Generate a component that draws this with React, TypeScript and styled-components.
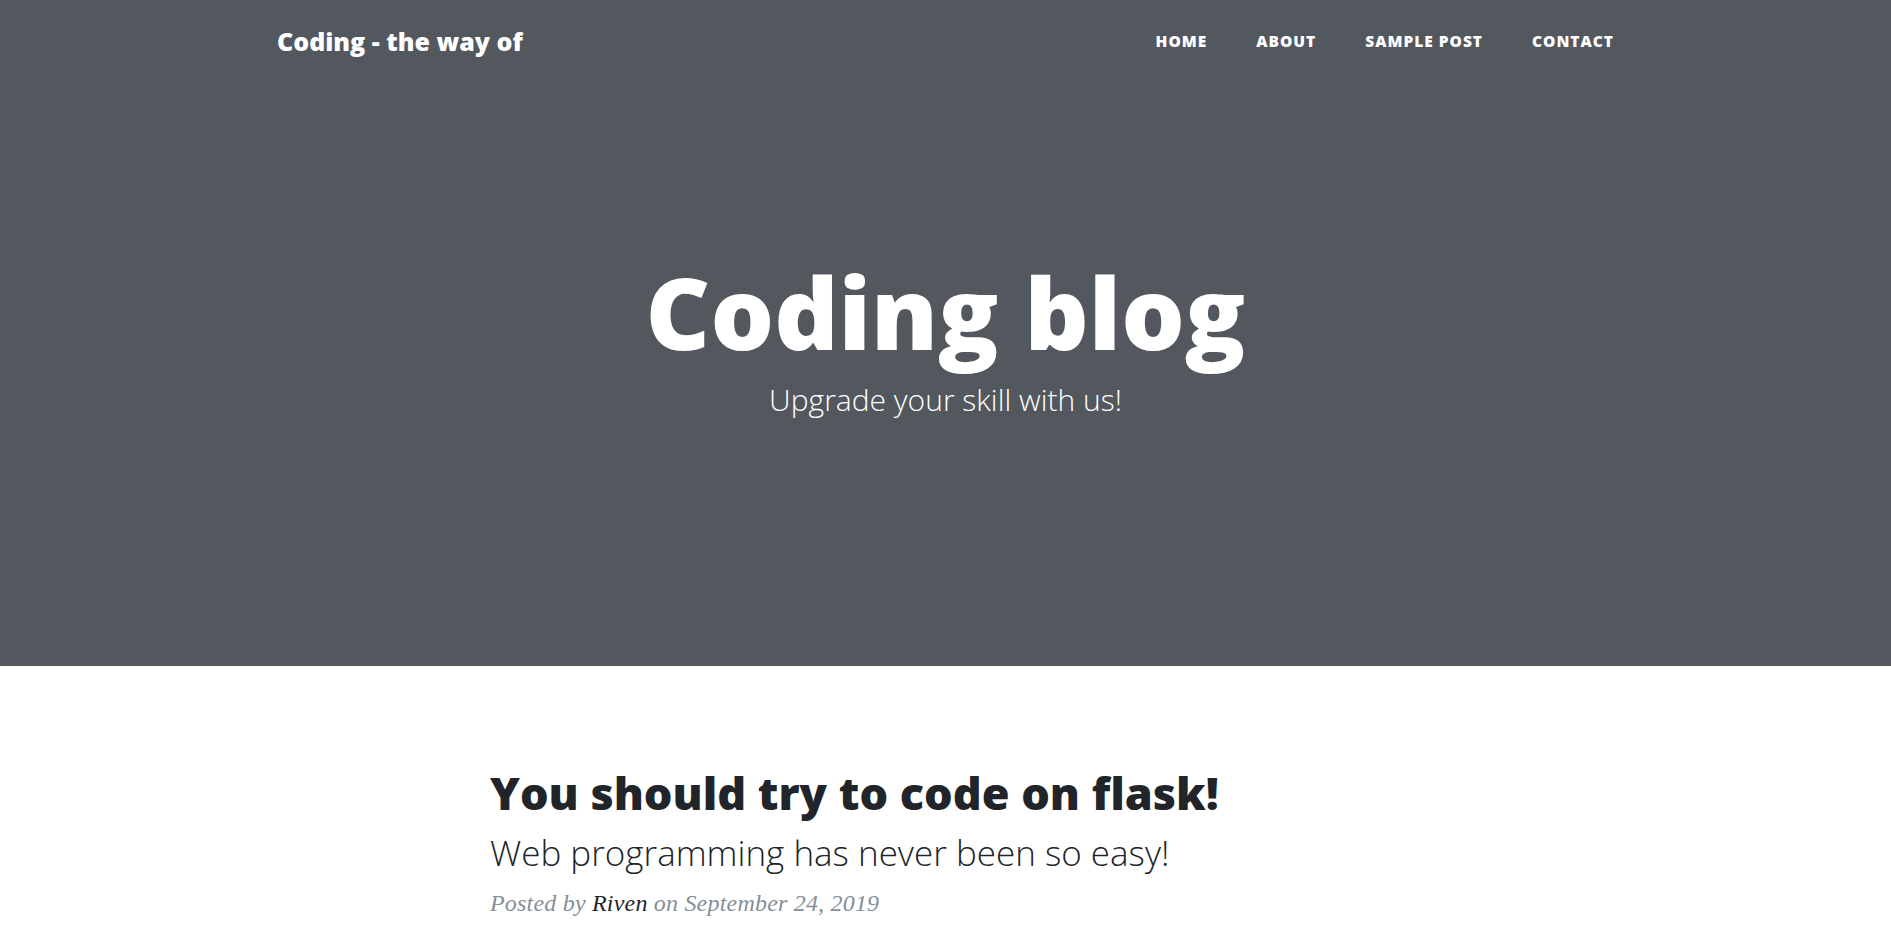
import React from "react";
import styled, { createGlobalStyle } from "styled-components";

const GlobalStyle = createGlobalStyle`
    html, body {
        margin: 0;
        padding: 0;
        background: #ffffff;
    }
    body {
        font-family: "Open Sans", "Liberation Sans", sans-serif;
        color: #212529;
    }
`;

const Masthead = styled.header`
    background-color: #53585f;
    height: 666px;
    box-sizing: border-box;
`;

const Container = styled.div`
    max-width: 1337px;
    margin: 0 auto;
`;

const Nav = styled.nav`
    display: flex;
    align-items: center;
    justify-content: space-between;
    padding-top: 25px;
`;

const Brand = styled.a`
    color: #ffffff;
    font-size: 25px;
    font-weight: 800;
    line-height: 33px;
    text-decoration: none;
`;

const NavList = styled.ul`
    display: flex;
    list-style: none;
    margin: 0;
    padding: 0;
    gap: 49px;
`;

const NavLink = styled.a`
    color: #ffffff;
    font-size: 15.5px;
    font-weight: 800;
    letter-spacing: 1px;
    text-transform: uppercase;
    text-decoration: none;
    line-height: 33px;
`;

const Heading = styled.div`
    display: flex;
    flex-direction: column;
    align-items: center;
    padding-top: 193px;
    color: #ffffff;
`;

const Title = styled.h1`
    margin: 0;
    font-size: 100px;
    font-weight: 800;
    line-height: 1.2;
`;

const Subheading = styled.span`
    margin-top: 12px;
    font-size: 30px;
    font-weight: 300;
    line-height: 1.1;
`;

const Posts = styled.main`
    max-width: 911px;
    margin: 100px auto 0;
`;

const PostLink = styled.a`
    color: #212529;
    text-decoration: none;
    display: block;
`;

const PostTitle = styled.h2`
    margin: 0;
    font-size: 45px;
    font-weight: 800;
    line-height: 1.2;
`;

const PostSubtitle = styled.h3`
    margin: 12px 0 0;
    font-size: 35px;
    font-weight: 300;
    line-height: 1.2;
`;

const PostMeta = styled.p`
    margin: 11px 0 0;
    font-family: "Liberation Serif", "DejaVu Serif", serif;
    font-style: italic;
    font-size: 24px;
    letter-spacing: 0.2px;
    line-height: 1.5;
    color: #868e96;

    a {
        color: #212529;
        text-decoration: none;
    }
`;

const navItems = ["Home", "About", "Sample Post", "Contact"];

const App = () => (
    <>
        <GlobalStyle />
        <Masthead>
            <Container>
                <Nav>
                    <Brand href="#">Coding - the way of</Brand>
                    <NavList>
                        {navItems.map((item) => (
                            <li key={item}>
                                <NavLink href="#">{item}</NavLink>
                            </li>
                        ))}
                    </NavList>
                </Nav>
                <Heading>
                    <Title>Coding blog</Title>
                    <Subheading>Upgrade your skill with us!</Subheading>
                </Heading>
            </Container>
        </Masthead>
        <Posts>
            <PostLink href="#">
                <PostTitle>You should try to code on flask!</PostTitle>
                <PostSubtitle>Web programming has never been so easy!</PostSubtitle>
            </PostLink>
            <PostMeta>
                Posted by <a href="#">Riven</a> on September 24, 2019
            </PostMeta>
        </Posts>
    </>
);

export default App;
